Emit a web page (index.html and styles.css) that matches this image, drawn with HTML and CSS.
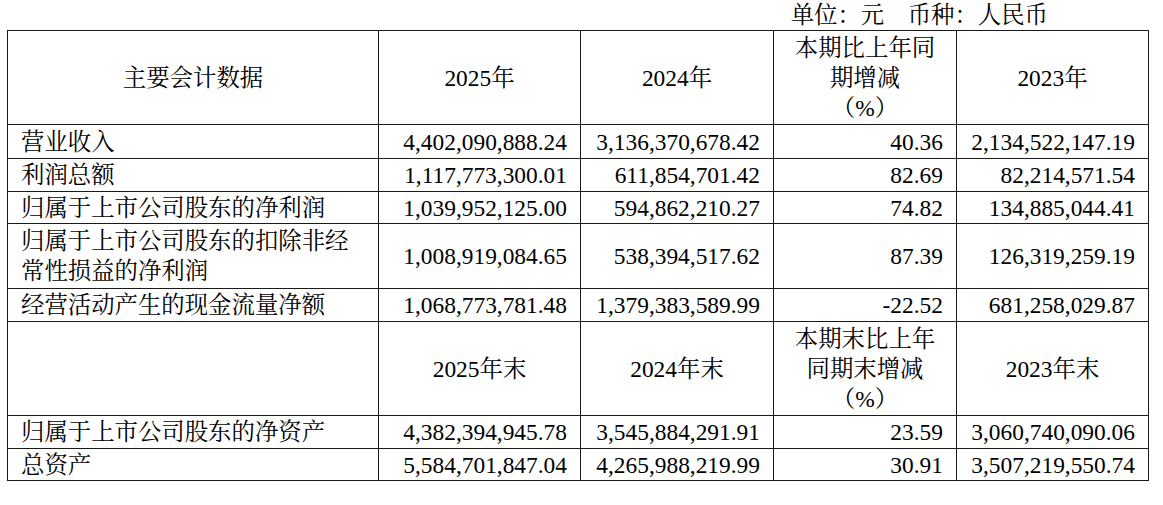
FILE: index.html
```html
<!DOCTYPE html>
<html lang="zh-CN">
<head>
<meta charset="utf-8">
<title>主要会计数据</title>
<link rel="stylesheet" href="styles.css">
</head>
<body>
<div class="page">
  <div class="unit">单位：元　币种：人民币</div>
  <table class="data">
    <colgroup>
      <col class="c1"><col class="c2"><col class="c3"><col class="c4"><col class="c5">
    </colgroup>
    <tr class="head">
      <td class="center">主要会计数据</td>
      <td class="center">2025年</td>
      <td class="center">2024年</td>
      <td class="center">本期比上年同<br>期增减<br>（%）</td>
      <td class="center">2023年</td>
    </tr>
    <tr class="r34">
      <td class="label">营业收入</td>
      <td class="num">4,402,090,888.24</td>
      <td class="num">3,136,370,678.42</td>
      <td class="num">40.36</td>
      <td class="num">2,134,522,147.19</td>
    </tr>
    <tr class="r33">
      <td class="label">利润总额</td>
      <td class="num">1,117,773,300.01</td>
      <td class="num">611,854,701.42</td>
      <td class="num">82.69</td>
      <td class="num">82,214,571.54</td>
    </tr>
    <tr class="r32">
      <td class="label">归属于上市公司股东的净利润</td>
      <td class="num">1,039,952,125.00</td>
      <td class="num">594,862,210.27</td>
      <td class="num">74.82</td>
      <td class="num">134,885,044.41</td>
    </tr>
    <tr class="r65">
      <td class="label">归属于上市公司股东的扣除非经<br>常性损益的净利润</td>
      <td class="num">1,008,919,084.65</td>
      <td class="num">538,394,517.62</td>
      <td class="num">87.39</td>
      <td class="num">126,319,259.19</td>
    </tr>
    <tr class="r33">
      <td class="label">经营活动产生的现金流量净额</td>
      <td class="num">1,068,773,781.48</td>
      <td class="num">1,379,383,589.99</td>
      <td class="num">-22.52</td>
      <td class="num">681,258,029.87</td>
    </tr>
    <tr class="head">
      <td class="center"></td>
      <td class="center">2025年末</td>
      <td class="center">2024年末</td>
      <td class="center">本期末比上年<br>同期末增减<br>（%）</td>
      <td class="center">2023年末</td>
    </tr>
    <tr class="r33">
      <td class="label">归属于上市公司股东的净资产</td>
      <td class="num">4,382,394,945.78</td>
      <td class="num">3,545,884,291.91</td>
      <td class="num">23.59</td>
      <td class="num">3,060,740,090.06</td>
    </tr>
    <tr class="r32">
      <td class="label">总资产</td>
      <td class="num">5,584,701,847.04</td>
      <td class="num">4,265,988,219.99</td>
      <td class="num">30.91</td>
      <td class="num">3,507,219,550.74</td>
    </tr>
  </table>
</div>
</body>
</html>
```

FILE: styles.css
```css
html, body {
  margin: 0;
  padding: 0;
  background: #ffffff;
}

body {
  font-family: "Liberation Serif", "Noto Serif CJK SC", "Noto Sans CJK SC", serif;
  font-size: 23.4px;
  color: #000000;
}

.page {
  padding: 0 7px;
}

.unit {
  height: 30px;
  line-height: 30px;
  text-align: right;
  padding-right: 108px;
  white-space: nowrap;
}

.data {
  border-collapse: collapse;
  table-layout: fixed;
  width: 1141px;
}

.c1 { width: 371px; }
.c2 { width: 202px; }
.c3 { width: 193px; }
.c4 { width: 183px; }
.c5 { width: 192px; }

.data td {
  border: 1px solid #1a1a1a;
  padding: 0 13px;
  line-height: 30px;
  vertical-align: middle;
  white-space: nowrap;
}

.data td.label {
  text-align: left;
}

.data td.num {
  text-align: right;
}

.data td.center {
  text-align: center;
}

.head { height: 94px; }
.r34 { height: 34px; }
.r33 { height: 33px; }
.r32 { height: 32px; }
.r65 { height: 65px; }
```
